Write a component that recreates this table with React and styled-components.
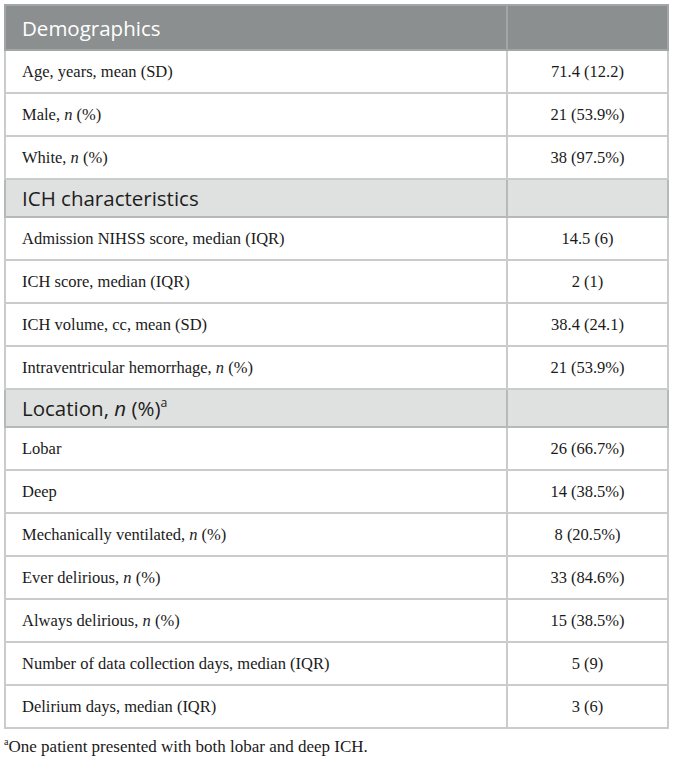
import styled, { createGlobalStyle } from 'styled-components';

const GlobalStyle = createGlobalStyle`
  html, body {
    margin: 0;
    padding: 0;
    background: #ffffff;
  }
`;

const Page = styled.div`
  padding: 4px 4px 0 4px;
  width: 665px;
`;

const Table = styled.table`
  width: 100%;
  border-collapse: collapse;
  border: 2px solid #b5b9b7;
  table-layout: fixed;
`;

const Col = styled.col`
  width: ${(p) => p.$width};
`;

const HeadRow = styled.tr`
  background: ${(p) => (p.$dark ? '#8b8f90' : '#dfe1e0')};
  height: ${(p) => (p.$dark ? '45px' : '38px')};
`;

const HeadCell = styled.td`
  border: 2px solid ${(p) => (p.$dark ? '#a2a6a6' : '#b5b9b7')};
  padding: 0 16px;
  font-family: 'Open Sans', 'Noto Sans', sans-serif;
  font-size: 20.5px;
  color: ${(p) => (p.$dark ? '#ffffff' : '#1d1d1d')};
  vertical-align: middle;
`;

const Row = styled.tr`
  height: 43px;
`;

const Cell = styled.td`
  border: 2px solid #c9cccb;
  padding: 0 16px;
  font-family: 'Liberation Serif', serif;
  font-size: 16.5px;
  color: #1a1a1a;
  text-align: ${(p) => (p.$center ? 'center' : 'left')};
  vertical-align: middle;
`;

const Sup = styled.sup`
  font-size: 0.6em;
  vertical-align: 0.7em;
  line-height: 0;
`;

const Footnote = styled.p`
  margin: 8px 0 0 0;
  font-family: 'Liberation Serif', serif;
  font-size: 17px;
  line-height: 20px;
  color: #1a1a1a;
`;

const sections = [
  {
    title: 'Demographics',
    dark: true,
    rows: [
      ['Age, years, mean (SD)', '71.4 (12.2)'],
      [<>Male, <i>n</i> (%)</>, '21 (53.9%)'],
      [<>White, <i>n</i> (%)</>, '38 (97.5%)'],
    ],
  },
  {
    title: 'ICH characteristics',
    rows: [
      ['Admission NIHSS score, median (IQR)', '14.5 (6)'],
      ['ICH score, median (IQR)', '2 (1)'],
      ['ICH volume, cc, mean (SD)', '38.4 (24.1)'],
      [<>Intraventricular hemorrhage, <i>n</i> (%)</>, '21 (53.9%)'],
    ],
  },
  {
    title: <>Location, <i>n</i> (%)<Sup>a</Sup></>,
    rows: [
      ['Lobar', '26 (66.7%)'],
      ['Deep', '14 (38.5%)'],
      [<>Mechanically ventilated, <i>n</i> (%)</>, '8 (20.5%)'],
      [<>Ever delirious, <i>n</i> (%)</>, '33 (84.6%)'],
      [<>Always delirious, <i>n</i> (%)</>, '15 (38.5%)'],
      ['Number of data collection days, median (IQR)', '5 (9)'],
      ['Delirium days, median (IQR)', '3 (6)'],
    ],
  },
];

export default function App() {
  return (
    <Page>
      <GlobalStyle />
      <Table>
        <colgroup>
          <Col $width="502px" />
          <Col $width="auto" />
        </colgroup>
        <tbody>
          {sections.map((s, i) => (
            <>
              <HeadRow key={`h${i}`} $dark={s.dark}>
                <HeadCell $dark={s.dark}>{s.title}</HeadCell>
                <HeadCell $dark={s.dark} />
              </HeadRow>
              {s.rows.map((r, j) => (
                <Row key={`r${i}-${j}`}>
                  <Cell>{r[0]}</Cell>
                  <Cell $center>{r[1]}</Cell>
                </Row>
              ))}
            </>
          ))}
        </tbody>
      </Table>
      <Footnote>
        <Sup>a</Sup>One patient presented with both lobar and deep ICH.
      </Footnote>
    </Page>
  );
}
